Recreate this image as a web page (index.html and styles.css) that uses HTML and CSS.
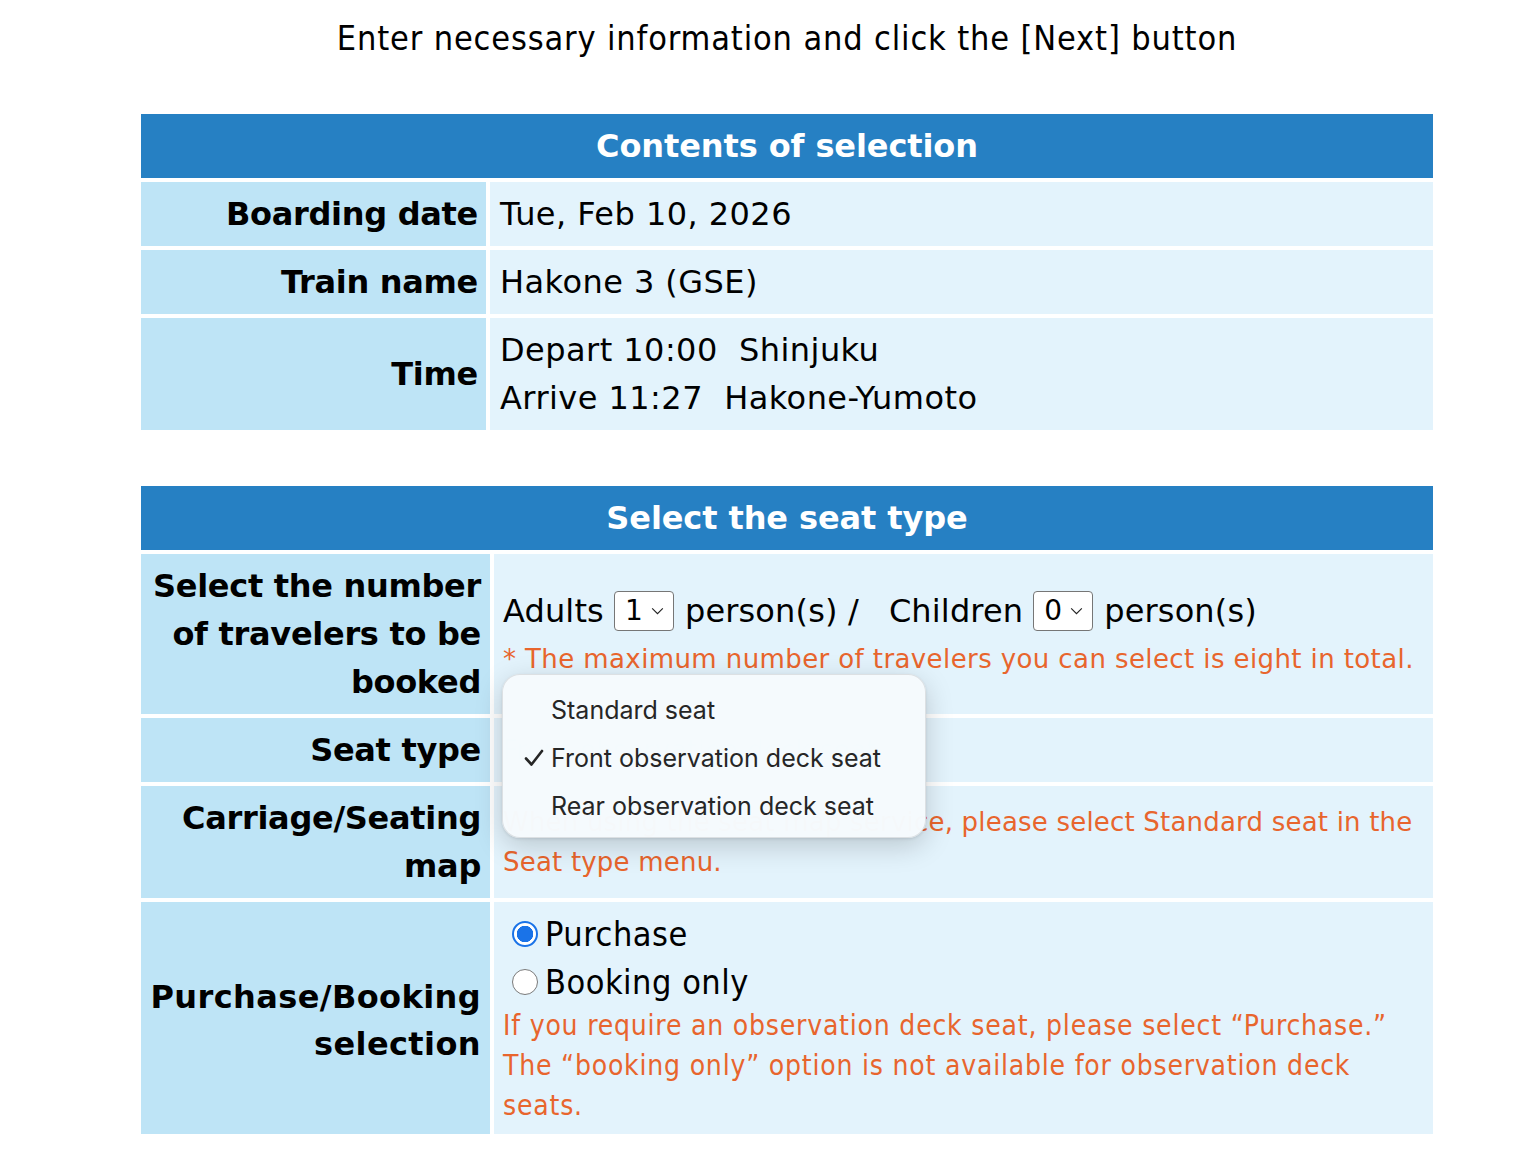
FILE: index.html
```html
<!DOCTYPE html>
<html lang="en">
<head>
<meta charset="utf-8">
<title>Select the seat type</title>
<link rel="stylesheet" href="styles.css">
</head>
<body>
<div class="page">
  <h1 class="intro">Enter necessary information and click the [Next] button</h1>

  <section class="panel panel-contents">
    <div class="panel-head">Contents of selection</div>
    <div class="label">Boarding date</div>
    <div class="value">Tue, Feb 10, 2026</div>
    <div class="label">Train name</div>
    <div class="value">Hakone 3 (GSE)</div>
    <div class="label">Time</div>
    <div class="value value-lines">
      <div>Depart 10:00&nbsp;&nbsp;Shinjuku</div>
      <div>Arrive 11:27&nbsp;&nbsp;Hakone-Yumoto</div>
    </div>
  </section>

  <section class="panel panel-seat">
    <div class="panel-head">Select the seat type</div>

    <div class="label label-tall">Select the number<br>of travelers to be<br>booked</div>
    <div class="value value-count">
      <div class="count-line">
        <span>Adults</span>
        <span class="select-box">1<svg class="chev" viewBox="0 0 14 9" width="13" height="8"><path d="M1 1.5 L7 7.5 L13 1.5" fill="none" stroke="#222" stroke-width="1.3"/></svg></span>
        <span>person(s) /</span>
        <span class="spacer"></span>
        <span>Children</span>
        <span class="select-box">0<svg class="chev" viewBox="0 0 14 9" width="13" height="8"><path d="M1 1.5 L7 7.5 L13 1.5" fill="none" stroke="#222" stroke-width="1.3"/></svg></span>
        <span>person(s)</span>
      </div>
      <div class="note">* The maximum number of travelers you can select is eight in total.</div>
    </div>

    <div class="label">Seat type</div>
    <div class="value value-seat">
      <span class="seat-select">Front observation deck seat</span>
    </div>

    <div class="label">Carriage/Seating<br>map</div>
    <div class="value">
      <div class="note note-map">When using the seat map service, please select Standard seat in the<br>Seat type menu.</div>
    </div>

    <div class="label label-buy">Purchase/Booking<br>selection</div>
    <div class="value value-buy">
      <div class="radio-line"><span class="radio radio-on"></span>Purchase</div>
      <div class="radio-line"><span class="radio"></span>Booking only</div>
      <div class="note note-cond">If you require an observation deck seat, please select “Purchase.”<br>The “booking only” option is not available for observation deck<br>seats.</div>
    </div>

    <div class="popup">
      <div class="popup-item">Standard seat</div>
      <div class="popup-item popup-checked"><svg class="check" viewBox="0 0 20 18" width="20" height="18"><path d="M2 9.5 L7.5 15.5 L18 2" fill="none" stroke="#262626" stroke-width="2.6" stroke-linecap="round" stroke-linejoin="round"/></svg>Front observation deck seat</div>
      <div class="popup-item">Rear observation deck seat</div>
    </div>
  </section>
</div>
</body>
</html>
```

FILE: styles.css
```css
* { box-sizing: border-box; }

html, body {
  margin: 0;
  padding: 0;
  background: #ffffff;
}

body {
  font-family: "DejaVu Sans", Verdana, sans-serif;
  color: #000;
}

.page {
  width: 1292px;
  margin-left: 141px;
  padding-bottom: 15px;
}

.intro {
  margin: 0;
  height: 114px;
  padding-top: 16px;
  text-align: center;
  font-family: "DejaVu Sans Condensed", "DejaVu Sans", sans-serif;
  font-weight: normal;
  font-size: 34px;
  line-height: 44px;
  letter-spacing: 0.85px;
}

.panel {
  position: relative;
  display: grid;
  grid-template-columns: 345px 1fr;
  gap: 4px;
}

.panel-seat {
  grid-template-columns: 349px 1fr;
  margin-top: 56px;
}

.panel-head {
  grid-column: 1 / -1;
  height: 64px;
  background: #2680c3;
  color: #fff;
  font-weight: bold;
  font-size: 32px;
  line-height: 64px;
  text-align: center;
  letter-spacing: -0.1px;
}

.label {
  background: #bee4f6;
  font-weight: bold;
  font-size: 32px;
  line-height: 48px;
  text-align: right;
  padding: 8px;
  display: flex;
  flex-direction: column;
  justify-content: center;
  min-height: 64px;
  white-space: nowrap;
  letter-spacing: -0.3px;
}

.panel-seat .label { padding-right: 9px; }

.label-buy {
  line-height: 47px;
  letter-spacing: 0.4px;
  padding-top: 14px;
}

.value {
  background: #e3f3fc;
  font-size: 32px;
  line-height: 48px;
  padding: 8px 10px;
  display: flex;
  flex-direction: column;
  justify-content: center;
  min-height: 64px;
  letter-spacing: 0.45px;
}

.panel-seat .value { padding-left: 9px; }

.count-line {
  display: flex;
  align-items: center;
  height: 48px;
  white-space: nowrap;
  letter-spacing: 0.15px;
}

.count-line .select-box { margin: 0 11px 0 10px; }
.count-line .spacer { width: 30px; }

.select-box {
  display: inline-flex;
  align-items: center;
  justify-content: space-between;
  width: 60px;
  height: 40px;
  padding: 0 9px 0 10px;
  background: #fff;
  border: 1px solid #767676;
  border-radius: 4px;
  font-size: 28px;
  line-height: 38px;
  letter-spacing: 0;
}

.chev { display: block; }

.note {
  color: #e8652d;
  font-size: 26px;
  line-height: 40px;
  letter-spacing: 0.4px;
}

.note-map {
  white-space: nowrap;
  letter-spacing: 0.2px;
}

.value-count .note { line-height: 44px; padding-top: 2px; }

.note-cond {
  font-family: "DejaVu Sans Condensed", "DejaVu Sans", sans-serif;
  font-size: 28px;
  letter-spacing: 0.8px;
}

.seat-select {
  display: inline-block;
  color: #b8c4cc;
  font-size: 26px;
}

.radio-line {
  display: flex;
  align-items: center;
  height: 48px;
  font-family: "DejaVu Sans Condensed", "DejaVu Sans", sans-serif;
  font-size: 34px;
  letter-spacing: 0.5px;
  padding-left: 9px;
}

.radio {
  width: 26px;
  height: 26px;
  border-radius: 50%;
  border: 1.5px solid #7a7a7a;
  background: #fff;
  margin-right: 7px;
  flex: none;
}

.radio-on {
  border: 2.5px solid #1a73e8;
  background: radial-gradient(circle, #1a73e8 0 8px, #fff 8.5px);
}

.popup {
  position: absolute;
  left: 361px;
  top: 188px;
  width: 424px;
  height: 164px;
  padding: 11px 0;
  background: rgba(245, 250, 253, 0.99);
  border: 1px solid rgba(0, 0, 0, 0.1);
  border-radius: 18px;
  box-shadow: 0 8px 28px rgba(0, 0, 0, 0.18), 0 1px 3px rgba(0, 0, 0, 0.1);
  font-family: Inter, "Noto Sans", sans-serif;
  font-size: 25px;
  color: #262626;
}

.popup-item {
  position: relative;
  height: 48px;
  line-height: 48px;
  padding-left: 48px;
}

.check {
  position: absolute;
  left: 21px;
  top: 15px;
}
```
